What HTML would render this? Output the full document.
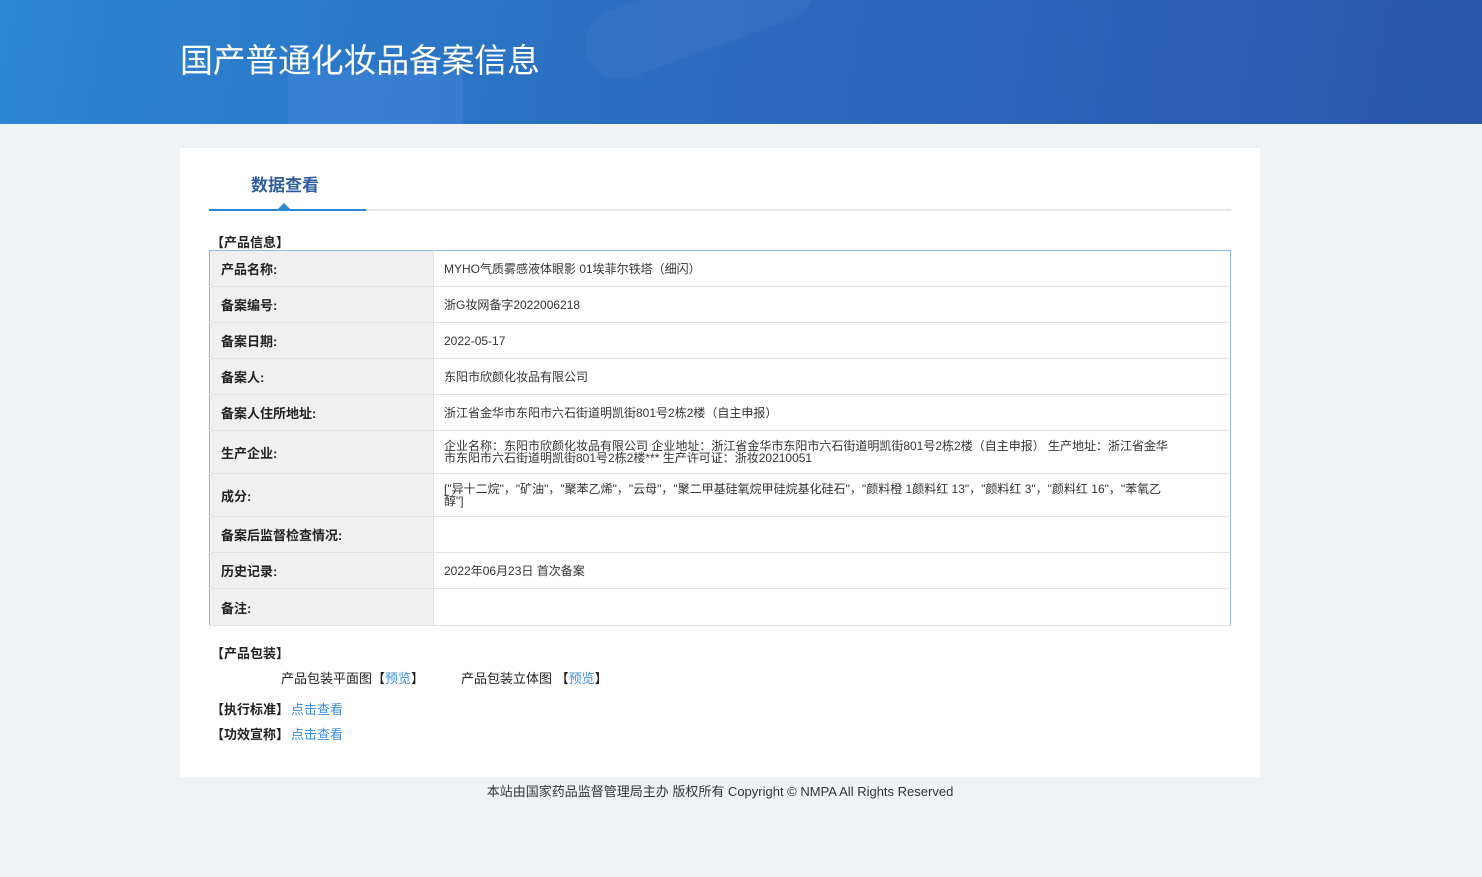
<!DOCTYPE html>
<html><head><meta charset="utf-8"><style>
*{margin:0;padding:0;box-sizing:border-box}
body{width:1482px;height:877px;background:#eff3f6;font-family:"Liberation Sans","Noto Sans CJK SC",sans-serif;color:#333;position:relative;overflow:hidden}
.hd{position:absolute;left:0;top:0;width:1482px;height:124px;background:linear-gradient(100deg,#2e86d4 0%,#2a6fc0 40%,#2d62b8 70%,#2a58a8 100%);overflow:hidden}
.hd .s1{position:absolute;left:288px;top:70px;width:175px;height:60px;background:rgba(80,140,230,.35)}
.hd .s2{position:absolute;left:580px;top:-20px;width:240px;height:70px;border-radius:40px;background:rgba(255,255,255,.035);transform:rotate(-20deg)}
.hd h1{position:absolute;left:180px;top:37px;font-size:33px;font-weight:normal;color:#fff;font-family:"Noto Sans CJK SC",sans-serif;line-height:42px;letter-spacing:-0.3px}
.card{position:absolute;left:180px;top:148px;width:1080px;height:629px;background:#fff}
.tab{position:absolute;left:71px;top:23px;font-size:17px;font-weight:bold;color:#2d5d9e}
.line{position:absolute;left:29px;top:61px;width:1022px;height:2px;background:#e6e6e6}
.line b{position:absolute;left:0;top:0;width:157px;height:2px;background:#2f86d4}
.tri{position:absolute;left:98px;top:55px;width:0;height:0;border-left:6px solid transparent;border-right:6px solid transparent;border-bottom:6px solid #2f86d4}
.sec{position:absolute;font-size:13px;font-weight:bold;color:#222}
table{position:absolute;left:29px;top:102px;width:1022px;border-collapse:collapse;border:1px solid #94b8e4;font-size:12px}
td{border-bottom:1px solid #e2e2e2;vertical-align:middle}
td.l{width:224px;background:#f0f0f0;font-weight:bold;font-size:13px;padding-left:11px;border-right:1px solid #e2e2e2;color:#222}
td.v{padding-left:10px;color:#333;line-height:12px}
a{color:#3a8ee0;text-decoration:none}
.t{position:absolute;font-size:13px;color:#222}
.ft{position:absolute;top:781px;left:0;width:1440px;text-align:center;font-size:13px;color:#333}
</style></head><body>
<div class="hd"><div class="s1"></div><div class="s2"></div><h1>国产普通化妆品备案信息</h1></div>
<div class="card">
<div class="tab">数据查看</div>
<div class="line"><b></b></div><div class="tri"></div>
<div class="sec" style="left:31px;top:84px">【产品信息】</div>
<table>
<tr style="height:36px"><td class="l">产品名称:</td><td class="v">MYHO气质雾感液体眼影 01埃菲尔铁塔（细闪）</td></tr>
<tr style="height:36px"><td class="l">备案编号:</td><td class="v">浙G妆网备字2022006218</td></tr>
<tr style="height:36px"><td class="l">备案日期:</td><td class="v">2022-05-17</td></tr>
<tr style="height:36px"><td class="l">备案人:</td><td class="v">东阳市欣颜化妆品有限公司</td></tr>
<tr style="height:36px"><td class="l">备案人住所地址:</td><td class="v">浙江省金华市东阳市六石街道明凯街801号2栋2楼（自主申报）</td></tr>
<tr style="height:43px"><td class="l">生产企业:</td><td class="v">企业名称：东阳市欣颜化妆品有限公司 企业地址：浙江省金华市东阳市六石街道明凯街801号2栋2楼（自主申报） 生产地址：浙江省金华<br>市东阳市六石街道明凯街801号2栋2楼*** 生产许可证：浙妆20210051</td></tr>
<tr style="height:43px"><td class="l">成分:</td><td class="v">["异十二烷"，"矿油"，"聚苯乙烯"，"云母"，"聚二甲基硅氧烷甲硅烷基化硅石"，"颜料橙 1颜料红 13"，"颜料红 3"，"颜料红 16"，"苯氧乙<br>醇"]</td></tr>
<tr style="height:36px"><td class="l">备案后监督检查情况:</td><td class="v"></td></tr>
<tr style="height:36px"><td class="l">历史记录:</td><td class="v">2022年06月23日 首次备案</td></tr>
<tr style="height:37px"><td class="l">备注:</td><td class="v"></td></tr>
</table>
<div class="sec" style="left:31px;top:495px">【产品包装】</div>
<div class="t" style="left:101px;top:520px">产品包装平面图【<a>预览</a>】</div>
<div class="t" style="left:281px;top:520px">产品包装立体图 【<a>预览</a>】</div>
<div class="sec" style="left:31px;top:551px">【执行标准】<a style="font-weight:normal;margin-left:2px">点击查看</a></div>
<div class="sec" style="left:31px;top:576px">【功效宣称】<a style="font-weight:normal;margin-left:2px">点击查看</a></div>
</div>
<div class="ft">本站由国家药品监督管理局主办 版权所有 Copyright © NMPA All Rights Reserved</div>
</body></html>
